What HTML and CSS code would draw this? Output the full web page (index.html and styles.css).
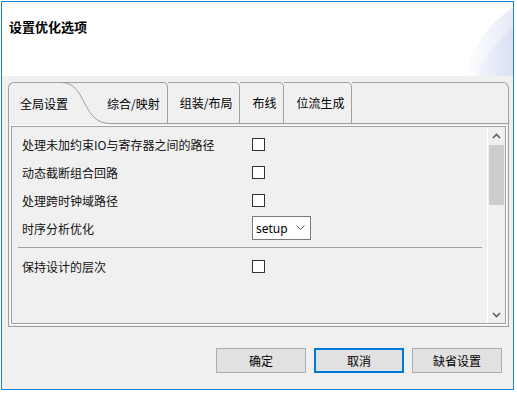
FILE: index.html
```html
<!DOCTYPE html>
<html>
<head>
  <title>设置优化选项</title>
  <link rel="stylesheet" href="styles.css">
</head>
<body>
  <div class="window">
    <div class="header">
      <div class="title">设置优化选项</div>
      <svg class="deco" width="80" height="74" viewBox="0 0 80 74">
        <defs>
          <linearGradient id="fade1" gradientUnits="userSpaceOnUse" x1="30" y1="0" x2="80" y2="0">
            <stop offset="0" stop-color="#ffffff"/>
            <stop offset="1" stop-color="#e6eaf7"/>
          </linearGradient>
          <linearGradient id="fade2" gradientUnits="userSpaceOnUse" x1="44" y1="0" x2="80" y2="0">
            <stop offset="0" stop-color="#f3f5fb"/>
            <stop offset="1" stop-color="#d9e0f3"/>
          </linearGradient>
        </defs>
        <circle cx="138" cy="98" r="109" fill="url(#fade1)"/>
        <circle cx="148" cy="113" r="111" fill="url(#fade2)"/>
      </svg>
    </div>

    <div class="main">
      <div class="tabs">
        <div class="tab tab-active">全局设置
          <svg class="tab-curve" width="51" height="42" viewBox="0 0 51 42">
            <path d="M0 0.5 C12 0.5 17 6 24 20 C31 34 37 41.5 51 41.5" fill="none" stroke="#a0a0a0" stroke-width="1"/>
          </svg>
        </div>
        <div class="tab tab-next">综合/映射</div>
        <div class="tab">组装/布局</div>
        <div class="tab">布线</div>
        <div class="tab">位流生成</div>
        <div class="tab-fill"></div>
      </div>

      <div class="page">
        <div class="panel">
          <div class="options">
            <div class="row">
              <span class="row-label">处理未加约束IO与寄存器之间的路径</span>
              <input type="checkbox" class="check">
            </div>
            <div class="row">
              <span class="row-label">动态截断组合回路</span>
              <input type="checkbox" class="check">
            </div>
            <div class="row">
              <span class="row-label">处理跨时钟域路径</span>
              <input type="checkbox" class="check">
            </div>
            <div class="row">
              <span class="row-label">时序分析优化</span>
              <div class="combo">
                <span>setup</span>
                <svg width="9" height="6" viewBox="0 0 9 6"><path d="M0.5 0.5 L4.5 4.5 L8.5 0.5" fill="none" stroke="#606060" stroke-width="1"/></svg>
              </div>
            </div>
            <div class="sep"></div>
            <div class="row">
              <span class="row-label">保持设计的层次</span>
              <input type="checkbox" class="check">
            </div>
          </div>

          <div class="scrollbar">
            <div class="arrow">
              <svg width="9" height="6" viewBox="0 0 9 6"><path d="M1 5 L4.5 1.5 L8 5" fill="none" stroke="#606060" stroke-width="1.6"/></svg>
            </div>
            <div class="track"><div class="thumb"></div></div>
            <div class="arrow">
              <svg width="9" height="6" viewBox="0 0 9 6"><path d="M1 1 L4.5 4.5 L8 1" fill="none" stroke="#606060" stroke-width="1.6"/></svg>
            </div>
          </div>
        </div>
      </div>

      <div class="buttons">
        <button class="btn">确定</button>
        <button class="btn btn-default">取消</button>
        <button class="btn">缺省设置</button>
      </div>
    </div>
  </div>
</body>
</html>
```

FILE: styles.css
```css
body {
  margin: 0;
  background: #fff;
  font-family: "Noto Sans CJK SC", "Noto Sans", sans-serif;
  font-size: 12px;
  color: #000;
}

.window {
  margin: 1px;
  width: 513px;
  height: 389px;
  box-sizing: border-box;
  border: 1px solid #1b84d8;
  background: #f0f0f0;
  display: flex;
  flex-direction: column;
}

.header {
  height: 74px;
  box-sizing: border-box;
  padding: 15px 0 0 7px;
  background: #fff;
  position: relative;
  flex-shrink: 0;
}

.title {
  font-size: 13px;
  font-weight: bold;
  line-height: 20px;
}

.deco {
  position: absolute;
  right: 0;
  top: 0;
}

.main {
  flex: 1;
  padding: 6px 4px 0 6px;
}

/* tab strip */
.tabs {
  display: flex;
  height: 42px;
}

.tab {
  box-sizing: border-box;
  height: 42px;
  border: 1px solid #a0a0a0;
  border-left: none;
  border-top-right-radius: 5px;
  padding: 0 7px 0 12px;
  display: flex;
  align-items: center;
  line-height: 16px;
  white-space: nowrap;
}

.tab-active {
  width: 99px;
  border-left: 1px solid #a0a0a0;
  border-right: none;
  border-bottom: none;
  border-radius: 6px 0 0 0;
  padding-left: 11px;
  position: relative;
}

.tab-curve {
  position: absolute;
  left: 51px;
  top: -1px;
}

.tab-next {
  padding-left: 0;
  border-bottom: none;
  background: linear-gradient(#a0a0a0, #a0a0a0) 3px 100% / calc(100% - 3px) 1px no-repeat;
}

.tab-fill {
  flex: 1;
  box-sizing: border-box;
  height: 42px;
  border: 1px solid #a0a0a0;
  border-left: none;
  border-top-right-radius: 6px;
}

/* page */
.page {
  height: 203px;
  box-sizing: border-box;
  border: 1px solid #a0a0a0;
  border-top: none;
  padding: 2px;
}

.panel {
  height: 100%;
  box-sizing: border-box;
  border: 1px solid #a0a0a0;
  box-shadow: 0 0 0 1px #fff;
  display: flex;
}

.options {
  flex: 1;
  padding: 3px 0 0 10px;
}

.row {
  display: flex;
  align-items: center;
  height: 28px;
}

.row-label {
  width: 230px;
  color: #111;
}

.check {
  appearance: none;
  margin: 0;
  width: 13px;
  height: 13px;
  box-sizing: border-box;
  border: 1px solid #333;
  background: #fff;
}

.combo {
  width: 59px;
  height: 24px;
  box-sizing: border-box;
  border: 1px solid #7a7a7a;
  background: #fff;
  display: flex;
  align-items: center;
  justify-content: space-between;
  padding: 0 5px 0 3px;
  font-family: "Noto Sans", sans-serif;
  font-size: 12px;
}

.sep {
  height: 1px;
  background: #a0a0a0;
  margin: 5px 5px 4px -4px;
}

/* scrollbar */
.scrollbar {
  width: 18px;
  box-sizing: border-box;
  border-left: 1px solid #fff;
  display: flex;
  flex-direction: column;
}

.arrow {
  height: 17px;
  display: flex;
  align-items: center;
  justify-content: center;
}

.track {
  flex: 1;
  padding: 1px 1px 0 1px;
}

.thumb {
  height: 60px;
  background: #cdcdcd;
}

/* dialog buttons */
.buttons {
  display: flex;
  justify-content: flex-end;
  gap: 8px;
  margin-top: 21px;
  padding-right: 7px;
}

.btn {
  width: 90px;
  height: 25px;
  box-sizing: border-box;
  border: 1px solid #adadad;
  background: #e1e1e1;
  padding: 0;
  font-family: inherit;
  font-size: 12px;
  color: #000;
}

.btn-default {
  border: 2px solid #0078d7;
}
```
